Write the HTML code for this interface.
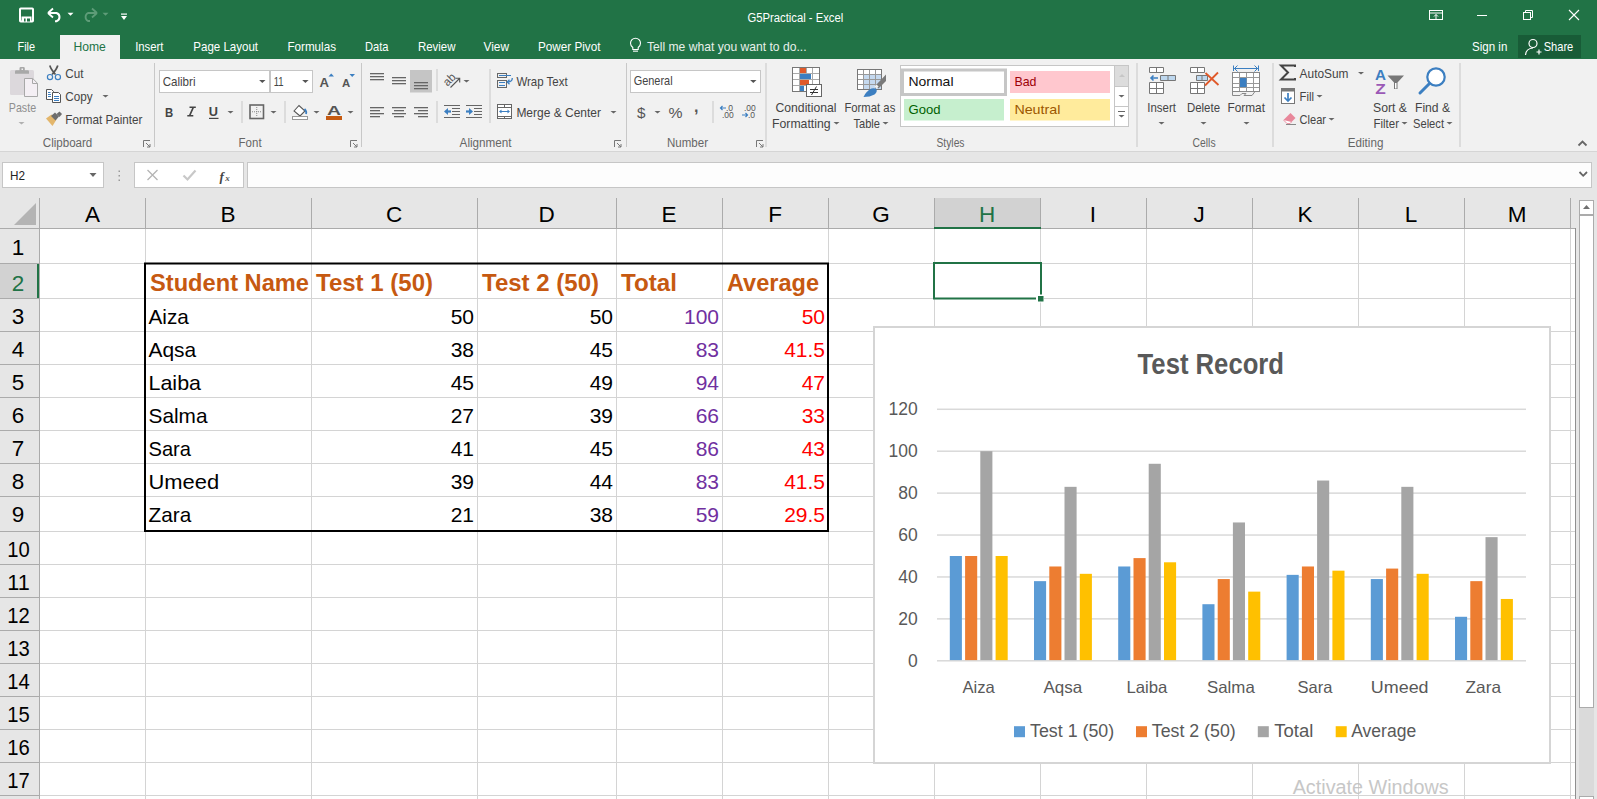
<!DOCTYPE html>
<html><head><meta charset="utf-8"><style>
html,body{margin:0;padding:0;width:1597px;height:799px;overflow:hidden;background:#fff}
svg{display:block;font-family:"Liberation Sans", sans-serif}
</style></head><body>
<svg width="1597" height="799" viewBox="0 0 1597 799">
<rect x="0" y="0" width="1597" height="59" fill="#217346"/>
<rect x="20" y="8.5" width="13" height="13" rx="0.8" fill="none" stroke="#fff" stroke-width="2"/>
<rect x="21.5" y="16.5" width="10" height="5" fill="#fff"/>
<rect x="24" y="18.5" width="1.6" height="3" fill="#217346"/>
<rect x="27" y="18.5" width="3" height="3" fill="#217346"/>
<path d="M49,13 H56.5 A4.3,4.3 0 0 1 56.5,21.2 H55" fill="none" stroke="#fff" stroke-width="2"/>
<path d="M48,13 L53,8.5 M48,13 L53,17.5" fill="none" stroke="#fff" stroke-width="1.8"/>
<polygon points="67.5,12.75 73.5,12.75 70.5,15.75" fill="#fff"/>
<path d="M96,13 H88 A4.5,4.5 0 0 0 88,21 H90" fill="none" stroke="#5e9c78" stroke-width="1.8"/>
<path d="M97,13 L92,8.5 M97,13 L92,17.5" fill="none" stroke="#5e9c78" stroke-width="1.8"/>
<polygon points="102.5,12.75 108.5,12.75 105.5,15.75" fill="#5e9c78"/>
<rect x="121" y="13.5" width="6" height="1.2" fill="#fff"/>
<polygon points="121,16 127,16 124,20" fill="#fff"/>
<text x="747.4" y="21.9" font-size="12" fill="#fff" textLength="95.9" lengthAdjust="spacingAndGlyphs">G5Practical - Excel</text>
<rect x="1429.5" y="10.5" width="13" height="9" fill="none" stroke="#fff" stroke-width="1"/>
<rect x="1429.5" y="12.5" width="13" height="1" fill="#fff"/>
<path d="M1436,19 V14.5 M1434,16.5 L1436,14.5 L1438,16.5" fill="none" stroke="#fff" stroke-width="1"/>
<rect x="1477" y="15" width="10" height="1" fill="#fff"/>
<rect x="1523.5" y="12.5" width="7" height="7" fill="none" stroke="#fff" stroke-width="1"/>
<path d="M1525.5,12.5 V10.5 H1532.5 V17.5 H1530.5" fill="none" stroke="#fff" stroke-width="1"/>
<path d="M1569,10 L1579,20 M1579,10 L1569,20" stroke="#fff" stroke-width="1.1"/>
<rect x="60" y="35" width="60" height="24" fill="#f1f1f1"/>
<text x="17.5" y="51.1" font-size="12.4" fill="#fff" textLength="17.6" lengthAdjust="spacingAndGlyphs">File</text>
<text x="73.4" y="51.1" font-size="12.4" fill="#217346" textLength="32.4" lengthAdjust="spacingAndGlyphs">Home</text>
<text x="135.2" y="51.1" font-size="12.4" fill="#fff" textLength="28.30000000000001" lengthAdjust="spacingAndGlyphs">Insert</text>
<text x="193.3" y="51.1" font-size="12.4" fill="#fff" textLength="64.69999999999999" lengthAdjust="spacingAndGlyphs">Page Layout</text>
<text x="287.4" y="51.1" font-size="12.4" fill="#fff" textLength="48.60000000000002" lengthAdjust="spacingAndGlyphs">Formulas</text>
<text x="365" y="51.1" font-size="12.4" fill="#fff" textLength="23.5" lengthAdjust="spacingAndGlyphs">Data</text>
<text x="418" y="51.1" font-size="12.4" fill="#fff" textLength="37.5" lengthAdjust="spacingAndGlyphs">Review</text>
<text x="483.5" y="51.1" font-size="12.4" fill="#fff" textLength="25.5" lengthAdjust="spacingAndGlyphs">View</text>
<text x="538" y="51.1" font-size="12.4" fill="#fff" textLength="62.5" lengthAdjust="spacingAndGlyphs">Power Pivot</text>
<path d="M632.8,47.5 Q630.5,45.5 630.5,43.2 A5,5 0 1 1 640.5,43.2 Q640.5,45.5 638.2,47.5 V49.5 H632.8 Z" fill="none" stroke="#fff" stroke-width="1.1"/>
<rect x="633" y="50.6" width="5" height="1.1" fill="#fff"/>
<text x="647" y="51.1" font-size="12.4" fill="#e8f0ea" textLength="159.5" lengthAdjust="spacingAndGlyphs">Tell me what you want to do...</text>
<text x="1472" y="51.1" font-size="12.4" fill="#fff" textLength="35.3" lengthAdjust="spacingAndGlyphs">Sign in</text>
<rect x="1518" y="35" width="63" height="23" fill="#185c37"/>
<circle cx="1533" cy="43.5" r="4" fill="none" stroke="#fff" stroke-width="1.2"/>
<path d="M1525.5,55 Q1526,48.5 1533,48" fill="none" stroke="#fff" stroke-width="1.2"/>
<path d="M1536.5,52 H1541.5 M1539,49.5 V54.5" stroke="#fff" stroke-width="1.2"/>
<text x="1543.7" y="51.1" font-size="12.4" fill="#fff" textLength="29.6" lengthAdjust="spacingAndGlyphs">Share</text>
<rect x="0" y="59" width="1597" height="92" fill="#f1f1f1"/>
<rect x="0" y="151" width="1597" height="1" fill="#d5d5d5"/>
<rect x="10" y="70" width="24" height="25" rx="1.5" fill="#dcd8dc"/>
<path d="M15,73.8 V71.5 Q15,70.3 16.3,70.3 H19.5 V68.3 Q19.5,67.1 20.8,67.1 H23.5 Q24.8,67.1 24.8,68.3 V70.3 H27.8 Q29,70.3 29,71.5 V73.8 Z" fill="#a8a8a8"/>
<rect x="21.5" y="68.5" width="1.5" height="1.5" fill="#f1f1f1"/>
<path d="M24.5,78.5 H32.7 L37.5,83.3 V96.5 H24.5 Z" fill="#f4eff4" stroke="#a8a8a8" stroke-width="1"/>
<path d="M32.5,78.5 V83.5 H37.5" fill="none" stroke="#a8a8a8" stroke-width="1"/>
<text x="8.8" y="111.6" font-size="12.4" fill="#8f8f8f" textLength="27.3" lengthAdjust="spacingAndGlyphs">Paste</text>
<polygon points="18.5,122.0 24.5,122.0 21.5,124.5" fill="#b0b0b0"/>
<path d="M49.8,65.5 Q51,69.5 55.5,74.5 M57.8,65.5 Q56.6,69.5 52.1,74.5" fill="none" stroke="#555" stroke-width="1.7"/>
<circle cx="50" cy="77.1" r="2.6" fill="none" stroke="#3c7fc1" stroke-width="1.2"/>
<circle cx="57.9" cy="77.1" r="2.6" fill="none" stroke="#3c7fc1" stroke-width="1.2"/>
<text x="65.3" y="77.8" font-size="12.4" fill="#444444" textLength="18.2" lengthAdjust="spacingAndGlyphs">Cut</text>
<path d="M46.5,89.5 H51.5 L53.5,91.5 V99.5 H46.5 Z" fill="#fff" stroke="#555" stroke-width="1"/>
<path d="M52.5,92.5 H58.5 L60.5,94.5 V102.5 H52.5 Z" fill="#fff" stroke="#555" stroke-width="1"/>
<rect x="48" y="92" width="2.5" height="1" fill="#3c7fc1"/>
<rect x="48" y="94" width="3" height="1" fill="#3c7fc1"/>
<rect x="48" y="96" width="3" height="1" fill="#3c7fc1"/>
<rect x="54" y="96" width="5" height="1" fill="#3c7fc1"/>
<rect x="54" y="98" width="5" height="1" fill="#3c7fc1"/>
<rect x="54" y="100" width="5" height="1" fill="#3c7fc1"/>
<text x="65.3" y="100.6" font-size="12.4" fill="#444444" textLength="27.3" lengthAdjust="spacingAndGlyphs">Copy</text>
<polygon points="102.5,94.9 108.5,94.9 105.5,97.6" fill="#666"/>
<path d="M46,118.5 L51.5,114.5 L56.5,119.5 L52.5,126 Z" fill="#e3b66c"/>
<path d="M51,116 L55,112.5 L59,116.5 L55.5,120.5 Z" fill="#6d6d6d"/>
<path d="M56.5,114 L59.5,111.5 L62,114 L59.5,117 Z" fill="#6d6d6d"/>
<text x="65.3" y="123.6" font-size="12.4" fill="#444444" textLength="77.2" lengthAdjust="spacingAndGlyphs">Format Painter</text>
<text x="42.8" y="146.6" font-size="12" fill="#666666" textLength="49.5" lengthAdjust="spacingAndGlyphs">Clipboard</text>
<path d="M143.5,147 V140.5 H150" fill="none" stroke="#777" stroke-width="1"/>
<path d="M146,143 L150,147 M147,147 H150 V144" fill="none" stroke="#777" stroke-width="1"/>
<rect x="154" y="63" width="1" height="84" fill="#c8c8c8"/>
<rect x="159.5" y="70.5" width="110" height="22" fill="#fff" stroke="#c6c6c6" stroke-width="1"/>
<rect x="270.5" y="70.5" width="42" height="22" fill="#fff" stroke="#c6c6c6" stroke-width="1"/>
<text x="162.7" y="85.8" font-size="12.4" fill="#444444" textLength="32.8" lengthAdjust="spacingAndGlyphs">Calibri</text>
<polygon points="259.1,80.1 265.5,80.1 262.3,83.0" fill="#555"/>
<text x="273.7" y="85.8" font-size="12.4" fill="#444444" textLength="9.9" lengthAdjust="spacingAndGlyphs">11</text>
<polygon points="302.2,80.1 308.59999999999997,80.1 305.4,83.0" fill="#555"/>
<text x="319.4" y="87.2" font-size="13.5" fill="#555" font-weight="bold" textLength="9.5" lengthAdjust="spacingAndGlyphs">A</text>
<polygon points="328.5,76.5 334,76.5 331.2,73.5" fill="#3c7fc1"/>
<text x="342" y="87.2" font-size="10.5" fill="#555" font-weight="bold" textLength="8.2" lengthAdjust="spacingAndGlyphs">A</text>
<polygon points="349.5,74 355,74 352.2,77" fill="#3c7fc1"/>
<text x="165" y="116.6" font-size="13" fill="#444" font-weight="bold" textLength="8.2" lengthAdjust="spacingAndGlyphs">B</text>
<path d="M189.5,107.3 H195.8 M187.3,115.8 H193.3 M193.3,107.3 L189.5,115.8" fill="none" stroke="#444" stroke-width="1.6"/>
<text x="208.8" y="116.2" font-size="12.5" fill="#444" font-weight="bold" textLength="9.2" lengthAdjust="spacingAndGlyphs">U</text>
<rect x="209" y="117.8" width="9.5" height="1.2" fill="#444"/>
<polygon points="227.5,110.9 233.5,110.9 230.5,113.6" fill="#666"/>
<rect x="241.5" y="101" width="1" height="22" fill="#c8c8c8"/>
<rect x="250" y="105" width="13.5" height="13.5" fill="none" stroke="#666" stroke-width="1.6"/>
<path d="M256.75,107 V117 M252,111.75 H261.5" stroke="#888" stroke-width="1" stroke-dasharray="1,1"/>
<polygon points="270.5,110.9 276.5,110.9 273.5,113.6" fill="#666"/>
<rect x="284.5" y="101" width="1" height="22" fill="#c8c8c8"/>
<path d="M294,111 L299,105.5 L305,111 L300,116 Z" fill="#fff" stroke="#555" stroke-width="1.1"/>
<path d="M304.5,109 Q307,111.5 306,114" fill="none" stroke="#3c7fc1" stroke-width="1.8"/>
<rect x="292.5" y="116.5" width="15" height="3" fill="#fff" stroke="#999" stroke-width="1"/>
<polygon points="313.5,110.9 319.5,110.9 316.5,113.6" fill="#666"/>
<text x="327" y="115" font-size="13.5" fill="#555" font-weight="bold" textLength="14" lengthAdjust="spacingAndGlyphs">A</text>
<rect x="326" y="116" width="16" height="4" fill="#c55a11"/>
<polygon points="347.5,110.9 353.5,110.9 350.5,113.6" fill="#666"/>
<text x="238.6" y="146.6" font-size="12" fill="#666666" textLength="23" lengthAdjust="spacingAndGlyphs">Font</text>
<path d="M350.5,147 V140.5 H357" fill="none" stroke="#777" stroke-width="1"/>
<path d="M353,143 L357,147 M354,147 H357 V144" fill="none" stroke="#777" stroke-width="1"/>
<rect x="361" y="63" width="1" height="84" fill="#c8c8c8"/>
<rect x="370" y="73" width="14" height="1.3" fill="#666"/>
<rect x="370" y="76" width="14" height="1.3" fill="#666"/>
<rect x="370" y="79" width="14" height="1.3" fill="#666"/>
<rect x="392" y="77" width="14" height="1.3" fill="#666"/>
<rect x="392" y="80" width="14" height="1.3" fill="#666"/>
<rect x="392" y="83" width="14" height="1.3" fill="#666"/>
<rect x="410" y="70" width="22" height="22.5" fill="#c5c5c5"/>
<rect x="414" y="82" width="14" height="1.3" fill="#666"/>
<rect x="414" y="85" width="14" height="1.3" fill="#666"/>
<rect x="414" y="88" width="14" height="1.3" fill="#666"/>
<rect x="370" y="107" width="14" height="1.3" fill="#666"/>
<rect x="370" y="110" width="10" height="1.3" fill="#666"/>
<rect x="370" y="113" width="14" height="1.3" fill="#666"/>
<rect x="370" y="116" width="10" height="1.3" fill="#666"/>
<rect x="392.0" y="107" width="14" height="1.3" fill="#666"/>
<rect x="394.0" y="110" width="10" height="1.3" fill="#666"/>
<rect x="392.0" y="113" width="14" height="1.3" fill="#666"/>
<rect x="394.0" y="116" width="10" height="1.3" fill="#666"/>
<rect x="414" y="107" width="14" height="1.3" fill="#666"/>
<rect x="418" y="110" width="10" height="1.3" fill="#666"/>
<rect x="414" y="113" width="14" height="1.3" fill="#666"/>
<rect x="418" y="116" width="10" height="1.3" fill="#666"/>
<rect x="436.5" y="69" width="1" height="22" fill="#c8c8c8"/>
<rect x="436.5" y="101" width="1" height="22" fill="#c8c8c8"/>
<text x="449.3" y="83.5" font-size="11.5" fill="#555" text-anchor="middle" transform="rotate(-45 449.3 79.5)">ab</text>
<path d="M450.5,87.5 L459.5,78.5 M455.5,78.3 H459.7 V82.5" fill="none" stroke="#555" stroke-width="1.1"/>
<polygon points="463.5,79.9 469.5,79.9 466.5,82.6" fill="#666"/>
<rect x="444" y="105" width="16" height="1" fill="#666"/>
<rect x="444" y="117" width="16" height="1" fill="#666"/>
<rect x="452" y="108" width="8" height="1" fill="#666"/>
<rect x="452" y="111" width="8" height="1" fill="#666"/>
<rect x="452" y="114" width="8" height="1" fill="#666"/>
<path d="M451,111.5 H446.5" stroke="#3c7fc1" stroke-width="2.2"/>
<polygon points="444,111.5 448,108 448,115" fill="#3c7fc1"/>
<rect x="466" y="105" width="16" height="1" fill="#666"/>
<rect x="466" y="117" width="16" height="1" fill="#666"/>
<rect x="474" y="108" width="8" height="1" fill="#666"/>
<rect x="474" y="111" width="8" height="1" fill="#666"/>
<rect x="474" y="114" width="8" height="1" fill="#666"/>
<path d="M466,111.5 H470.5" stroke="#3c7fc1" stroke-width="2.2"/>
<polygon points="473,111.5 469,108 469,115" fill="#3c7fc1"/>
<rect x="489.5" y="69" width="1" height="54" fill="#c8c8c8"/>
<rect x="497.5" y="73.5" width="9" height="4" fill="none" stroke="#666" stroke-width="1"/>
<rect x="497.5" y="80.5" width="9" height="7" fill="none" stroke="#666" stroke-width="1"/>
<rect x="499" y="75" width="12" height="1" fill="#3c7fc1"/>
<rect x="499" y="82" width="6" height="1" fill="#3c7fc1"/>
<rect x="499" y="85" width="6" height="1" fill="#3c7fc1"/>
<path d="M512.3,78 Q512.3,82 507.5,82" fill="none" stroke="#3c7fc1" stroke-width="1.3"/>
<path d="M509.5,79.8 L507.3,82 L509.5,84.2" fill="none" stroke="#3c7fc1" stroke-width="1.3"/>
<text x="516.4" y="86.2" font-size="12.4" fill="#444444" textLength="51.2" lengthAdjust="spacingAndGlyphs">Wrap Text</text>
<rect x="497.5" y="104.5" width="14" height="14" fill="#fff" stroke="#666" stroke-width="1"/>
<rect x="498" y="107" width="13" height="1" fill="#666"/>
<rect x="498" y="116" width="13" height="1" fill="#666"/>
<rect x="504" y="105" width="1" height="2" fill="#666"/>
<rect x="504" y="116" width="1" height="2.5" fill="#666"/>
<path d="M500.5,111.5 H508.5" stroke="#3c7fc1" stroke-width="1"/>
<polygon points="499,111.5 501.5,109.5 501.5,113.5" fill="#3c7fc1"/>
<polygon points="510,111.5 507.5,109.5 507.5,113.5" fill="#3c7fc1"/>
<text x="516.4" y="116.7" font-size="12.4" fill="#444444" textLength="84.6" lengthAdjust="spacingAndGlyphs">Merge &amp; Center</text>
<polygon points="610.5,110.9 616.5,110.9 613.5,113.6" fill="#666"/>
<text x="459.6" y="146.6" font-size="12" fill="#666666" textLength="52" lengthAdjust="spacingAndGlyphs">Alignment</text>
<path d="M614.5,147 V140.5 H621" fill="none" stroke="#777" stroke-width="1"/>
<path d="M617,143 L621,147 M618,147 H621 V144" fill="none" stroke="#777" stroke-width="1"/>
<rect x="626" y="63" width="1" height="84" fill="#c8c8c8"/>
<rect x="630.5" y="70.5" width="130" height="22" fill="#fff" stroke="#c6c6c6" stroke-width="1"/>
<text x="633.7" y="85.4" font-size="12.4" fill="#444444" textLength="38.9" lengthAdjust="spacingAndGlyphs">General</text>
<polygon points="750.0999999999999,80.1 756.5,80.1 753.3,83.0" fill="#555"/>
<text x="637" y="117.5" font-size="15" fill="#555" textLength="8.5" lengthAdjust="spacingAndGlyphs">$</text>
<polygon points="654.5,110.9 660.5,110.9 657.5,113.6" fill="#666"/>
<text x="668.5" y="117.5" font-size="14" fill="#555" textLength="14" lengthAdjust="spacingAndGlyphs">%</text>
<text x="694" y="111.5" font-size="16" fill="#555" font-weight="bold">,</text>
<rect x="712.5" y="101" width="1" height="22" fill="#c8c8c8"/>
<text x="726" y="111" font-size="8.5" fill="#555">.0</text>
<text x="722" y="118" font-size="8.5" fill="#555">.00</text>
<path d="M726,108 H720.5 M722.5,106 L720.5,108 L722.5,110" fill="none" stroke="#3c7fc1" stroke-width="1.2"/>
<text x="744" y="111" font-size="8.5" fill="#555">.00</text>
<text x="748" y="118" font-size="8.5" fill="#555">.0</text>
<path d="M742,115 H747.5 M745.5,113 L747.5,115 L745.5,117" fill="none" stroke="#3c7fc1" stroke-width="1.2"/>
<text x="667" y="146.6" font-size="12" fill="#666666" textLength="41" lengthAdjust="spacingAndGlyphs">Number</text>
<path d="M756.5,147 V140.5 H763" fill="none" stroke="#777" stroke-width="1"/>
<path d="M759,143 L763,147 M760,147 H763 V144" fill="none" stroke="#777" stroke-width="1"/>
<rect x="765.5" y="63" width="1" height="84" fill="#c8c8c8"/>
<rect x="792.5" y="67.5" width="27" height="24" fill="#fff" stroke="#777" stroke-width="1"/>
<rect x="799" y="68" width="1" height="23" fill="#aaa"/>
<rect x="806" y="68" width="1" height="23" fill="#aaa"/>
<rect x="812" y="68" width="1" height="23" fill="#aaa"/>
<rect x="793" y="73" width="26" height="1" fill="#aaa"/>
<rect x="793" y="79" width="26" height="1" fill="#aaa"/>
<rect x="793" y="85" width="26" height="1" fill="#aaa"/>
<rect x="800" y="68" width="6" height="5" fill="#e05a2b"/>
<rect x="800" y="74" width="11" height="5" fill="#3c7fc1"/>
<rect x="800" y="80" width="9" height="5" fill="#e05a2b"/>
<rect x="800" y="86" width="4" height="5" fill="#3c7fc1"/>
<rect x="806.5" y="84.5" width="15" height="12" fill="#fff" stroke="#666" stroke-width="1"/>
<path d="M810,89.5 H818 M810,92.5 H818 M816.5,86.5 L811.5,95" fill="none" stroke="#333" stroke-width="1"/>
<text x="775.5" y="111.7" font-size="12.4" fill="#444444" textLength="61" lengthAdjust="spacingAndGlyphs">Conditional</text>
<text x="772" y="127.6" font-size="12.4" fill="#444444" textLength="58.6" lengthAdjust="spacingAndGlyphs">Formatting</text>
<polygon points="833.5,121.9 839.5,121.9 836.5,124.6" fill="#666"/>
<rect x="857.5" y="69.5" width="24" height="20" fill="#fff" stroke="#777" stroke-width="1"/>
<rect x="864" y="75" width="17" height="14" fill="#c5d9ef"/>
<rect x="863" y="70" width="1" height="19" fill="#999"/>
<rect x="869" y="70" width="1" height="19" fill="#999"/>
<rect x="875" y="70" width="1" height="19" fill="#999"/>
<rect x="858" y="74" width="23" height="1" fill="#999"/>
<rect x="858" y="79" width="23" height="1" fill="#999"/>
<rect x="858" y="84" width="23" height="1" fill="#999"/>
<polygon points="886,74.5 886,81 878.5,88.5 875.5,85.5" fill="#7a7a7a"/>
<rect x="875" y="85" width="3" height="3" fill="#f1f1f1" transform="rotate(45 876.5 86.5)"/>
<path d="M863.5,97 Q866,91 871.5,88.5 Q875,87.5 876.5,89.5 Q877.5,92 874.5,94.5 Q870,97 863.5,97 Z" fill="#3c7fc1"/>
<text x="844.4" y="111.7" font-size="12.4" fill="#444444" textLength="50.9" lengthAdjust="spacingAndGlyphs">Format as</text>
<text x="853.5" y="127.6" font-size="12.4" fill="#444444" textLength="26.5" lengthAdjust="spacingAndGlyphs">Table</text>
<polygon points="882.5,121.9 888.5,121.9 885.5,124.6" fill="#666"/>
<rect x="900.5" y="65.5" width="228" height="61" fill="#fff" stroke="#c6c6c6" stroke-width="1"/>
<rect x="902.5" y="70" width="103" height="24.5" fill="#fff" stroke="#c6c6c6" stroke-width="3"/>
<text x="908.5" y="85.5" font-size="13" fill="#111" textLength="45" lengthAdjust="spacingAndGlyphs">Normal</text>
<rect x="1010" y="71" width="100" height="22" fill="#ffc7ce"/>
<text x="1014.4" y="85.5" font-size="13" fill="#9c0006" textLength="22" lengthAdjust="spacingAndGlyphs">Bad</text>
<rect x="904" y="99" width="100" height="21.5" fill="#c6efce"/>
<text x="908.5" y="113.7" font-size="13" fill="#006100" textLength="32" lengthAdjust="spacingAndGlyphs">Good</text>
<rect x="1010" y="99" width="100" height="21.5" fill="#ffeb9c"/>
<text x="1014.4" y="113.7" font-size="13" fill="#9c5700" textLength="46" lengthAdjust="spacingAndGlyphs">Neutral</text>
<rect x="1114.5" y="65.5" width="14" height="61" fill="#fff" stroke="#c6c6c6" stroke-width="1"/>
<rect x="1115" y="66" width="13" height="20" fill="#dcdcdc"/>
<rect x="1114.5" y="86" width="14" height="1" fill="#c6c6c6"/>
<rect x="1114.5" y="106" width="14" height="1" fill="#c6c6c6"/>
<polygon points="1119,77 1125,77 1122,74" fill="#c6c6c6"/>
<polygon points="1118.5,94.9 1124.5,94.9 1121.5,97.6" fill="#666"/>
<rect x="1118" y="111" width="7" height="1" fill="#666"/>
<polygon points="1118.5,114.9 1124.5,114.9 1121.5,117.6" fill="#666"/>
<text x="936.5" y="146.6" font-size="12" fill="#666666" textLength="28" lengthAdjust="spacingAndGlyphs">Styles</text>
<rect x="1136.5" y="63" width="1" height="84" fill="#c8c8c8"/>
<path d="M1149.5,67.5 H1163.5 V72.5 H1149.5 Z M1156.5,67.5 V72.5" fill="#fff" stroke="#777" stroke-width="1"/>
<path d="M1149.5,82.5 H1163.5 V93.5 H1149.5 Z M1156.5,82.5 V93.5 M1149.5,88.5 H1163.5" fill="#fff" stroke="#777" stroke-width="1"/>
<path d="M1160.5,75.5 H1175.5 V80.5 H1160.5 Z M1168,75.5 V80.5" fill="#bdd7ee" stroke="#777" stroke-width="1"/>
<path d="M1158,78 H1151 M1153.5,75.5 L1151,78 L1153.5,80.5" fill="none" stroke="#3c7fc1" stroke-width="1.6"/>
<text x="1147.3" y="111.8" font-size="12.4" fill="#444444" textLength="28.6" lengthAdjust="spacingAndGlyphs">Insert</text>
<polygon points="1158.5,121.9 1164.5,121.9 1161.5,124.6" fill="#666"/>
<path d="M1190.5,67.5 H1204.5 V72.5 H1190.5 Z M1197.5,67.5 V72.5" fill="#fff" stroke="#777" stroke-width="1"/>
<path d="M1190.5,82.5 H1204.5 V93.5 H1190.5 Z M1197.5,82.5 V93.5 M1190.5,88.5 H1204.5" fill="#fff" stroke="#777" stroke-width="1"/>
<path d="M1196.5,75.5 H1207.5 V80.5 H1196.5 Z M1202,75.5 V80.5" fill="#bdd7ee" stroke="#777" stroke-width="1"/>
<path d="M1205.5,73 L1218.5,85 M1218,72.5 L1205,85.5" stroke="#e0592a" stroke-width="1.8"/>
<text x="1187" y="111.8" font-size="12.4" fill="#444444" textLength="33" lengthAdjust="spacingAndGlyphs">Delete</text>
<polygon points="1200.5,121.9 1206.5,121.9 1203.5,124.6" fill="#666"/>
<path d="M1234,68.5 H1258 M1233.5,65.5 V71 M1258.5,65.5 V71 M1234.5,68.5 L1237.5,65.5 M1234.5,68.5 L1237.5,71.5 M1257.5,68.5 L1254.5,65.5 M1257.5,68.5 L1254.5,71.5" fill="none" stroke="#3c7fc1" stroke-width="1"/>
<rect x="1232.5" y="72.5" width="27" height="19" fill="#fff" stroke="#888" stroke-width="1"/>
<rect x="1239" y="73" width="1" height="18" fill="#999"/>
<rect x="1246" y="73" width="1" height="18" fill="#999"/>
<rect x="1253" y="73" width="1" height="18" fill="#999"/>
<rect x="1233" y="77" width="26" height="1" fill="#999"/>
<rect x="1233" y="83" width="26" height="1" fill="#999"/>
<rect x="1233" y="87" width="26" height="1" fill="#999"/>
<rect x="1240" y="78" width="6.5" height="9" fill="#3c7fc1"/>
<path d="M1232.5,91.5 V95.5 H1240 L1242,93.5 H1246 L1244,95.5 H1252 L1255,91.5" fill="none" stroke="#888" stroke-width="1"/>
<text x="1227.5" y="111.8" font-size="12.4" fill="#444444" textLength="37.5" lengthAdjust="spacingAndGlyphs">Format</text>
<polygon points="1243.5,121.9 1249.5,121.9 1246.5,124.6" fill="#666"/>
<text x="1192.6" y="146.6" font-size="12" fill="#666666" textLength="23" lengthAdjust="spacingAndGlyphs">Cells</text>
<rect x="1272.5" y="63" width="1" height="84" fill="#c8c8c8"/>
<path d="M1295,67 V65.5 H1281 L1288,72.5 L1281,79.5 H1295 V78" fill="none" stroke="#444" stroke-width="2"/>
<text x="1299.6" y="77.6" font-size="12.4" fill="#444444" textLength="48.9" lengthAdjust="spacingAndGlyphs">AutoSum</text>
<polygon points="1358,71.9 1364,71.9 1361,74.6" fill="#666"/>
<rect x="1281.5" y="88.5" width="13" height="15" fill="#fff" stroke="#777" stroke-width="1"/>
<rect x="1281.5" y="88.5" width="13" height="3" fill="#777"/>
<path d="M1288,93 V101 M1284.5,97.5 L1288,101 L1291.5,97.5" fill="none" stroke="#3c7fc1" stroke-width="1.7"/>
<text x="1299.6" y="100.8" font-size="12.4" fill="#444444" textLength="14.4" lengthAdjust="spacingAndGlyphs">Fill</text>
<polygon points="1316.5,94.9 1322.5,94.9 1319.5,97.6" fill="#666"/>
<path d="M1283.5,120 L1290.5,113 L1295.5,118 L1290,123.5 H1287 Z" fill="#e8879a"/>
<path d="M1283.5,120 L1287,123.5 H1290 L1291.5,122" fill="#fff" stroke="#e8879a" stroke-width="0.8"/>
<rect x="1286" y="124" width="10" height="1" fill="#888"/>
<text x="1299.6" y="124.2" font-size="12.4" fill="#444444" textLength="26.4" lengthAdjust="spacingAndGlyphs">Clear</text>
<polygon points="1328.5,117.9 1334.5,117.9 1331.5,120.6" fill="#666"/>
<text x="1375" y="79.6" font-size="15" fill="#3c7fc1" font-weight="bold" textLength="11" lengthAdjust="spacingAndGlyphs">A</text>
<text x="1375.3" y="93.7" font-size="14.5" fill="#9b59b6" font-weight="bold" textLength="10.5" lengthAdjust="spacingAndGlyphs">Z</text>
<path d="M1387.5,75.5 H1404 L1397.5,82.5 V89 H1394 V82.5 Z" fill="#777"/>
<rect x="1395" y="83" width="1.5" height="5.5" fill="#fff"/>
<text x="1373" y="112.2" font-size="12.4" fill="#444444" textLength="34" lengthAdjust="spacingAndGlyphs">Sort &amp;</text>
<text x="1373.5" y="127.7" font-size="12.4" fill="#444444" textLength="25.5" lengthAdjust="spacingAndGlyphs">Filter</text>
<polygon points="1401.5,121.9 1407.5,121.9 1404.5,124.6" fill="#666"/>
<circle cx="1436" cy="77" r="8.7" fill="#fff" stroke="#3c7fc1" stroke-width="2.2"/>
<path d="M1429.5,83.5 L1420,93" stroke="#3c7fc1" stroke-width="3" stroke-linecap="round"/>
<text x="1415" y="112.2" font-size="12.4" fill="#444444" textLength="35" lengthAdjust="spacingAndGlyphs">Find &amp;</text>
<text x="1413" y="127.7" font-size="12.4" fill="#444444" textLength="31" lengthAdjust="spacingAndGlyphs">Select</text>
<polygon points="1446.5,121.9 1452.5,121.9 1449.5,124.6" fill="#666"/>
<text x="1347.8" y="146.6" font-size="12" fill="#666666" textLength="35.6" lengthAdjust="spacingAndGlyphs">Editing</text>
<rect x="1459.5" y="63" width="1" height="84" fill="#c8c8c8"/>
<path d="M1578.5,145.5 L1582.5,141.5 L1586.5,145.5" fill="none" stroke="#666" stroke-width="1.8"/>
<rect x="0" y="152" width="1597" height="47" fill="#e6e6e6"/>
<rect x="2.5" y="162.5" width="101" height="25" fill="#fff" stroke="#c6c6c6" stroke-width="1"/>
<text x="10" y="180" font-size="12.4" fill="#222" textLength="15" lengthAdjust="spacingAndGlyphs">H2</text>
<polygon points="89.5,173 96.5,173 93,177" fill="#666"/>
<rect x="118.5" y="170.5" width="1.5" height="1.5" fill="#999"/>
<rect x="118.5" y="175" width="1.5" height="1.5" fill="#999"/>
<rect x="118.5" y="179.5" width="1.5" height="1.5" fill="#999"/>
<rect x="134.5" y="162.5" width="109" height="25" fill="#fff" stroke="#c6c6c6" stroke-width="1"/>
<path d="M147.5,170 L157.5,180 M157.5,170 L147.5,180" stroke="#b4b4b4" stroke-width="1.3"/>
<path d="M183.5,175.5 L187.5,179.5 L195.5,170.5" fill="none" stroke="#c8c8c8" stroke-width="2.2"/>
<text x="219.5" y="180.5" font-size="13" fill="#444" font-style="italic" font-family="Liberation Serif" font-weight="bold">f</text>
<text x="225.2" y="180.5" font-size="9" fill="#555" font-style="italic" font-family="Liberation Serif" font-weight="bold">x</text>
<rect x="247.5" y="162.5" width="1344" height="25" fill="#fdfdfd" stroke="#c6c6c6" stroke-width="1"/>
<path d="M1579.5,172 L1583.2,175.8 L1587,172" fill="none" stroke="#666" stroke-width="1.8"/>
<rect x="0" y="198" width="1576" height="30" fill="#e6e6e6"/>
<rect x="40" y="229" width="1535" height="570" fill="#fff"/>
<rect x="0" y="229" width="39" height="570" fill="#e6e6e6"/>
<rect x="40" y="263" width="1535" height="1" fill="#d4d4d4"/>
<rect x="40" y="298" width="1535" height="1" fill="#d4d4d4"/>
<rect x="40" y="331" width="1535" height="1" fill="#d4d4d4"/>
<rect x="40" y="364" width="1535" height="1" fill="#d4d4d4"/>
<rect x="40" y="397" width="1535" height="1" fill="#d4d4d4"/>
<rect x="40" y="430" width="1535" height="1" fill="#d4d4d4"/>
<rect x="40" y="463" width="1535" height="1" fill="#d4d4d4"/>
<rect x="40" y="496" width="1535" height="1" fill="#d4d4d4"/>
<rect x="40" y="531" width="1535" height="1" fill="#d4d4d4"/>
<rect x="40" y="564" width="1535" height="1" fill="#d4d4d4"/>
<rect x="40" y="597" width="1535" height="1" fill="#d4d4d4"/>
<rect x="40" y="630" width="1535" height="1" fill="#d4d4d4"/>
<rect x="40" y="663" width="1535" height="1" fill="#d4d4d4"/>
<rect x="40" y="696" width="1535" height="1" fill="#d4d4d4"/>
<rect x="40" y="729" width="1535" height="1" fill="#d4d4d4"/>
<rect x="40" y="762" width="1535" height="1" fill="#d4d4d4"/>
<rect x="40" y="795" width="1535" height="1" fill="#d4d4d4"/>
<rect x="145" y="229" width="1" height="570" fill="#d4d4d4"/>
<rect x="311" y="229" width="1" height="570" fill="#d4d4d4"/>
<rect x="477" y="229" width="1" height="570" fill="#d4d4d4"/>
<rect x="616" y="229" width="1" height="570" fill="#d4d4d4"/>
<rect x="722" y="229" width="1" height="570" fill="#d4d4d4"/>
<rect x="828" y="229" width="1" height="570" fill="#d4d4d4"/>
<rect x="934" y="229" width="1" height="570" fill="#d4d4d4"/>
<rect x="1040" y="229" width="1" height="570" fill="#d4d4d4"/>
<rect x="1146" y="229" width="1" height="570" fill="#d4d4d4"/>
<rect x="1252" y="229" width="1" height="570" fill="#d4d4d4"/>
<rect x="1358" y="229" width="1" height="570" fill="#d4d4d4"/>
<rect x="1464" y="229" width="1" height="570" fill="#d4d4d4"/>
<rect x="1570" y="229" width="1" height="570" fill="#d4d4d4"/>
<rect x="145" y="198" width="1" height="30" fill="#ababab"/>
<rect x="311" y="198" width="1" height="30" fill="#ababab"/>
<rect x="477" y="198" width="1" height="30" fill="#ababab"/>
<rect x="616" y="198" width="1" height="30" fill="#ababab"/>
<rect x="722" y="198" width="1" height="30" fill="#ababab"/>
<rect x="828" y="198" width="1" height="30" fill="#ababab"/>
<rect x="934" y="198" width="1" height="30" fill="#ababab"/>
<rect x="1040" y="198" width="1" height="30" fill="#ababab"/>
<rect x="1146" y="198" width="1" height="30" fill="#ababab"/>
<rect x="1252" y="198" width="1" height="30" fill="#ababab"/>
<rect x="1358" y="198" width="1" height="30" fill="#ababab"/>
<rect x="1464" y="198" width="1" height="30" fill="#ababab"/>
<rect x="1570" y="198" width="1" height="30" fill="#ababab"/>
<rect x="0" y="263" width="39" height="1" fill="#ababab"/>
<rect x="0" y="298" width="39" height="1" fill="#ababab"/>
<rect x="0" y="331" width="39" height="1" fill="#ababab"/>
<rect x="0" y="364" width="39" height="1" fill="#ababab"/>
<rect x="0" y="397" width="39" height="1" fill="#ababab"/>
<rect x="0" y="430" width="39" height="1" fill="#ababab"/>
<rect x="0" y="463" width="39" height="1" fill="#ababab"/>
<rect x="0" y="496" width="39" height="1" fill="#ababab"/>
<rect x="0" y="531" width="39" height="1" fill="#ababab"/>
<rect x="0" y="564" width="39" height="1" fill="#ababab"/>
<rect x="0" y="597" width="39" height="1" fill="#ababab"/>
<rect x="0" y="630" width="39" height="1" fill="#ababab"/>
<rect x="0" y="663" width="39" height="1" fill="#ababab"/>
<rect x="0" y="696" width="39" height="1" fill="#ababab"/>
<rect x="0" y="729" width="39" height="1" fill="#ababab"/>
<rect x="0" y="762" width="39" height="1" fill="#ababab"/>
<rect x="0" y="795" width="39" height="1" fill="#ababab"/>
<rect x="0" y="228" width="1575" height="1" fill="#ababab"/>
<rect x="39" y="198" width="1" height="601" fill="#ababab"/>
<rect x="1575" y="228" width="1" height="571" fill="#ababab"/>
<rect x="935" y="198" width="105" height="30" fill="#d2d2d2"/>
<rect x="934" y="227" width="107" height="2" fill="#217346"/>
<rect x="0" y="264" width="38" height="34" fill="#d2d2d2"/>
<rect x="37" y="264" width="2" height="34" fill="#217346"/>
<polygon points="36,203 36,225 14,225" fill="#b4b4b4"/>
<text x="92.5" y="222" font-size="22.5" fill="#000" text-anchor="middle">A</text>
<text x="228.0" y="222" font-size="22.5" fill="#000" text-anchor="middle">B</text>
<text x="394.0" y="222" font-size="22.5" fill="#000" text-anchor="middle">C</text>
<text x="546.5" y="222" font-size="22.5" fill="#000" text-anchor="middle">D</text>
<text x="669.0" y="222" font-size="22.5" fill="#000" text-anchor="middle">E</text>
<text x="775.0" y="222" font-size="22.5" fill="#000" text-anchor="middle">F</text>
<text x="881.0" y="222" font-size="22.5" fill="#000" text-anchor="middle">G</text>
<text x="987.0" y="222" font-size="22.5" fill="#217346" text-anchor="middle">H</text>
<text x="1093.0" y="222" font-size="22.5" fill="#000" text-anchor="middle">I</text>
<text x="1199.0" y="222" font-size="22.5" fill="#000" text-anchor="middle">J</text>
<text x="1305.0" y="222" font-size="22.5" fill="#000" text-anchor="middle">K</text>
<text x="1411.0" y="222" font-size="22.5" fill="#000" text-anchor="middle">L</text>
<text x="1517.0" y="222" font-size="22.5" fill="#000" text-anchor="middle">M</text>
<text x="18" y="254.6" font-size="22.5" fill="#000" text-anchor="middle">1</text>
<text x="18" y="291" font-size="22.5" fill="#217346" text-anchor="middle">2</text>
<text x="18" y="324.2" font-size="22.5" fill="#000" text-anchor="middle">3</text>
<text x="18" y="357.2" font-size="22.5" fill="#000" text-anchor="middle">4</text>
<text x="18" y="390.2" font-size="22.5" fill="#000" text-anchor="middle">5</text>
<text x="18" y="423.2" font-size="22.5" fill="#000" text-anchor="middle">6</text>
<text x="18" y="456.2" font-size="22.5" fill="#000" text-anchor="middle">7</text>
<text x="18" y="489.2" font-size="22.5" fill="#000" text-anchor="middle">8</text>
<text x="18" y="522.2" font-size="22.5" fill="#000" text-anchor="middle">9</text>
<text x="7.25" y="557.2" font-size="22.5" fill="#000" textLength="22.5" lengthAdjust="spacingAndGlyphs">10</text>
<text x="7.25" y="590.2" font-size="22.5" fill="#000" textLength="22.5" lengthAdjust="spacingAndGlyphs">11</text>
<text x="7.25" y="623.2" font-size="22.5" fill="#000" textLength="22.5" lengthAdjust="spacingAndGlyphs">12</text>
<text x="7.25" y="656.2" font-size="22.5" fill="#000" textLength="22.5" lengthAdjust="spacingAndGlyphs">13</text>
<text x="7.25" y="689.2" font-size="22.5" fill="#000" textLength="22.5" lengthAdjust="spacingAndGlyphs">14</text>
<text x="7.25" y="722.2" font-size="22.5" fill="#000" textLength="22.5" lengthAdjust="spacingAndGlyphs">15</text>
<text x="7.25" y="755.2" font-size="22.5" fill="#000" textLength="22.5" lengthAdjust="spacingAndGlyphs">16</text>
<text x="7.25" y="788.2" font-size="22.5" fill="#000" textLength="22.5" lengthAdjust="spacingAndGlyphs">17</text>
<text x="150" y="290.7" font-size="23.2" fill="#c65911" font-weight="bold" textLength="159" lengthAdjust="spacingAndGlyphs">Student Name</text>
<text x="316" y="290.7" font-size="23.2" fill="#c65911" font-weight="bold" textLength="117" lengthAdjust="spacingAndGlyphs">Test 1 (50)</text>
<text x="482" y="290.7" font-size="23.2" fill="#c65911" font-weight="bold" textLength="117" lengthAdjust="spacingAndGlyphs">Test 2 (50)</text>
<text x="621" y="290.7" font-size="23.2" fill="#c65911" font-weight="bold" textLength="56" lengthAdjust="spacingAndGlyphs">Total</text>
<text x="727" y="290.7" font-size="23.2" fill="#c65911" font-weight="bold" textLength="92" lengthAdjust="spacingAndGlyphs">Average</text>
<text x="148.5" y="324" font-size="21" fill="#000" textLength="40.4" lengthAdjust="spacingAndGlyphs">Aiza</text>
<text x="474" y="324" font-size="21" fill="#000" text-anchor="end">50</text>
<text x="613" y="324" font-size="21" fill="#000" text-anchor="end">50</text>
<text x="719" y="324" font-size="21" fill="#7030a0" text-anchor="end">100</text>
<text x="825" y="324" font-size="21" fill="#ff0000" text-anchor="end">50</text>
<text x="148.5" y="357" font-size="21" fill="#000" textLength="47.7" lengthAdjust="spacingAndGlyphs">Aqsa</text>
<text x="474" y="357" font-size="21" fill="#000" text-anchor="end">38</text>
<text x="613" y="357" font-size="21" fill="#000" text-anchor="end">45</text>
<text x="719" y="357" font-size="21" fill="#7030a0" text-anchor="end">83</text>
<text x="825" y="357" font-size="21" fill="#ff0000" text-anchor="end">41.5</text>
<text x="148.5" y="390" font-size="21" fill="#000" textLength="52.5" lengthAdjust="spacingAndGlyphs">Laiba</text>
<text x="474" y="390" font-size="21" fill="#000" text-anchor="end">45</text>
<text x="613" y="390" font-size="21" fill="#000" text-anchor="end">49</text>
<text x="719" y="390" font-size="21" fill="#7030a0" text-anchor="end">94</text>
<text x="825" y="390" font-size="21" fill="#ff0000" text-anchor="end">47</text>
<text x="148.5" y="423" font-size="21" fill="#000" textLength="59.0" lengthAdjust="spacingAndGlyphs">Salma</text>
<text x="474" y="423" font-size="21" fill="#000" text-anchor="end">27</text>
<text x="613" y="423" font-size="21" fill="#000" text-anchor="end">39</text>
<text x="719" y="423" font-size="21" fill="#7030a0" text-anchor="end">66</text>
<text x="825" y="423" font-size="21" fill="#ff0000" text-anchor="end">33</text>
<text x="148.5" y="456" font-size="21" fill="#000" textLength="42.5" lengthAdjust="spacingAndGlyphs">Sara</text>
<text x="474" y="456" font-size="21" fill="#000" text-anchor="end">41</text>
<text x="613" y="456" font-size="21" fill="#000" text-anchor="end">45</text>
<text x="719" y="456" font-size="21" fill="#7030a0" text-anchor="end">86</text>
<text x="825" y="456" font-size="21" fill="#ff0000" text-anchor="end">43</text>
<text x="148.5" y="489" font-size="21" fill="#000" textLength="70.7" lengthAdjust="spacingAndGlyphs">Umeed</text>
<text x="474" y="489" font-size="21" fill="#000" text-anchor="end">39</text>
<text x="613" y="489" font-size="21" fill="#000" text-anchor="end">44</text>
<text x="719" y="489" font-size="21" fill="#7030a0" text-anchor="end">83</text>
<text x="825" y="489" font-size="21" fill="#ff0000" text-anchor="end">41.5</text>
<text x="148.5" y="522" font-size="21" fill="#000" textLength="42.7" lengthAdjust="spacingAndGlyphs">Zara</text>
<text x="474" y="522" font-size="21" fill="#000" text-anchor="end">21</text>
<text x="613" y="522" font-size="21" fill="#000" text-anchor="end">38</text>
<text x="719" y="522" font-size="21" fill="#7030a0" text-anchor="end">59</text>
<text x="825" y="522" font-size="21" fill="#ff0000" text-anchor="end">29.5</text>
<rect x="145" y="263.5" width="683" height="267.5" fill="none" stroke="#000" stroke-width="2"/>
<rect x="934" y="263" width="107" height="35.5" fill="none" stroke="#217346" stroke-width="2"/>
<rect x="1036" y="294.5" width="8" height="8" fill="#fff"/>
<rect x="1038" y="296" width="5.5" height="5.5" fill="#217346"/>
<rect x="1576" y="198" width="21" height="601" fill="#e6e6e6"/>
<rect x="1575" y="228" width="1" height="571" fill="#8f8f8f"/>
<rect x="1579" y="215" width="15" height="584" fill="#dadada"/>
<rect x="1579.5" y="200.5" width="14" height="14" fill="#fff" stroke="#ababab" stroke-width="1"/>
<polygon points="1583,209 1590,209 1586.5,205" fill="#707070"/>
<rect x="1579.5" y="215.5" width="14" height="492" fill="#fff" stroke="#ababab" stroke-width="1"/>
<rect x="1579.5" y="796.5" width="14" height="10" fill="#fff" stroke="#ababab" stroke-width="1"/>
<rect x="874" y="327" width="676" height="436" fill="#fff" stroke="#d5d5d5" stroke-width="2"/>
<text x="1137.6" y="373.6" font-size="29" fill="#595959" font-weight="bold" textLength="146.4" lengthAdjust="spacingAndGlyphs">Test Record</text>
<rect x="937" y="660.05" width="589" height="1.5" fill="#d9d9d9"/>
<text x="917.8" y="666.5999999999999" font-size="17.5" fill="#595959" text-anchor="end">0</text>
<rect x="937" y="618.13" width="589" height="1.5" fill="#d9d9d9"/>
<text x="917.8" y="624.68" font-size="17.5" fill="#595959" text-anchor="end">20</text>
<rect x="937" y="576.2099999999999" width="589" height="1.5" fill="#d9d9d9"/>
<text x="917.8" y="582.7599999999999" font-size="17.5" fill="#595959" text-anchor="end">40</text>
<rect x="937" y="534.29" width="589" height="1.5" fill="#d9d9d9"/>
<text x="917.8" y="540.8399999999999" font-size="17.5" fill="#595959" text-anchor="end">60</text>
<rect x="937" y="492.36999999999995" width="589" height="1.5" fill="#d9d9d9"/>
<text x="917.8" y="498.91999999999996" font-size="17.5" fill="#595959" text-anchor="end">80</text>
<rect x="937" y="450.44999999999993" width="589" height="1.5" fill="#d9d9d9"/>
<text x="917.8" y="456.99999999999994" font-size="17.5" fill="#595959" text-anchor="end">100</text>
<rect x="937" y="408.53" width="589" height="1.5" fill="#d9d9d9"/>
<text x="917.8" y="415.08" font-size="17.5" fill="#595959" text-anchor="end">120</text>
<rect x="949.8" y="556.0" width="12.1" height="104.1" fill="#5b9bd5"/>
<rect x="965.1" y="556.0" width="12.1" height="104.1" fill="#ed7d31"/>
<rect x="980.3" y="451.2" width="12.1" height="208.9" fill="#a5a5a5"/>
<rect x="995.6" y="556.0" width="12.1" height="104.1" fill="#ffc000"/>
<text x="962.4" y="692.5" font-size="16.5" fill="#595959" textLength="32.39999999999998" lengthAdjust="spacingAndGlyphs">Aiza</text>
<rect x="1034.0" y="581.15" width="12.1" height="78.95" fill="#5b9bd5"/>
<rect x="1049.3" y="566.48" width="12.1" height="93.62" fill="#ed7d31"/>
<rect x="1064.5" y="486.83" width="12.1" height="173.27" fill="#a5a5a5"/>
<rect x="1079.8" y="573.82" width="12.1" height="86.28" fill="#ffc000"/>
<text x="1043.5" y="692.5" font-size="16.5" fill="#595959" textLength="38.799999999999955" lengthAdjust="spacingAndGlyphs">Aqsa</text>
<rect x="1118.2" y="566.48" width="12.1" height="93.62" fill="#5b9bd5"/>
<rect x="1133.5" y="558.1" width="12.1" height="102.0" fill="#ed7d31"/>
<rect x="1148.7" y="463.78" width="12.1" height="196.32" fill="#a5a5a5"/>
<rect x="1164.0" y="562.29" width="12.1" height="97.81" fill="#ffc000"/>
<text x="1126.4" y="692.5" font-size="16.5" fill="#595959" textLength="41.0" lengthAdjust="spacingAndGlyphs">Laiba</text>
<rect x="1202.4" y="604.21" width="12.1" height="55.89" fill="#5b9bd5"/>
<rect x="1217.7" y="579.06" width="12.1" height="81.04" fill="#ed7d31"/>
<rect x="1232.9" y="522.46" width="12.1" height="137.64" fill="#a5a5a5"/>
<rect x="1248.2" y="591.63" width="12.1" height="68.47" fill="#ffc000"/>
<text x="1207" y="692.5" font-size="16.5" fill="#595959" textLength="47.799999999999955" lengthAdjust="spacingAndGlyphs">Salma</text>
<rect x="1286.6" y="574.86" width="12.1" height="85.24" fill="#5b9bd5"/>
<rect x="1301.9" y="566.48" width="12.1" height="93.62" fill="#ed7d31"/>
<rect x="1317.1" y="480.54" width="12.1" height="179.56" fill="#a5a5a5"/>
<rect x="1332.4" y="570.67" width="12.1" height="89.43" fill="#ffc000"/>
<text x="1297.6" y="692.5" font-size="16.5" fill="#595959" textLength="34.90000000000009" lengthAdjust="spacingAndGlyphs">Sara</text>
<rect x="1370.8" y="579.06" width="12.1" height="81.04" fill="#5b9bd5"/>
<rect x="1386.1" y="568.58" width="12.1" height="91.52" fill="#ed7d31"/>
<rect x="1401.3" y="486.83" width="12.1" height="173.27" fill="#a5a5a5"/>
<rect x="1416.6" y="573.82" width="12.1" height="86.28" fill="#ffc000"/>
<text x="1370.8" y="692.5" font-size="16.5" fill="#595959" textLength="57.799999999999955" lengthAdjust="spacingAndGlyphs">Umeed</text>
<rect x="1455.0" y="616.78" width="12.1" height="43.32" fill="#5b9bd5"/>
<rect x="1470.3" y="581.15" width="12.1" height="78.95" fill="#ed7d31"/>
<rect x="1485.5" y="537.14" width="12.1" height="122.96" fill="#a5a5a5"/>
<rect x="1500.8" y="598.97" width="12.1" height="61.13" fill="#ffc000"/>
<text x="1465.6" y="692.5" font-size="16.5" fill="#595959" textLength="35.40000000000009" lengthAdjust="spacingAndGlyphs">Zara</text>
<rect x="1014" y="726.2" width="11" height="11" fill="#5b9bd5"/>
<text x="1030" y="736.8" font-size="17.5" fill="#595959" textLength="84.20000000000005" lengthAdjust="spacingAndGlyphs">Test 1 (50)</text>
<rect x="1136" y="726.2" width="11" height="11" fill="#ed7d31"/>
<text x="1151.8" y="736.8" font-size="17.5" fill="#595959" textLength="83.90000000000009" lengthAdjust="spacingAndGlyphs">Test 2 (50)</text>
<rect x="1257.8" y="726.2" width="11" height="11" fill="#a5a5a5"/>
<text x="1274.2" y="736.8" font-size="17.5" fill="#595959" textLength="39.09999999999991" lengthAdjust="spacingAndGlyphs">Total</text>
<rect x="1335.7" y="726.2" width="11" height="11" fill="#ffc000"/>
<text x="1351.2" y="736.8" font-size="17.5" fill="#595959" textLength="65.0" lengthAdjust="spacingAndGlyphs">Average</text>
<text x="1292.7" y="794" font-size="20" fill="#c2c2c2" textLength="156" lengthAdjust="spacingAndGlyphs" opacity="0.9">Activate Windows</text>
</svg></body></html>
